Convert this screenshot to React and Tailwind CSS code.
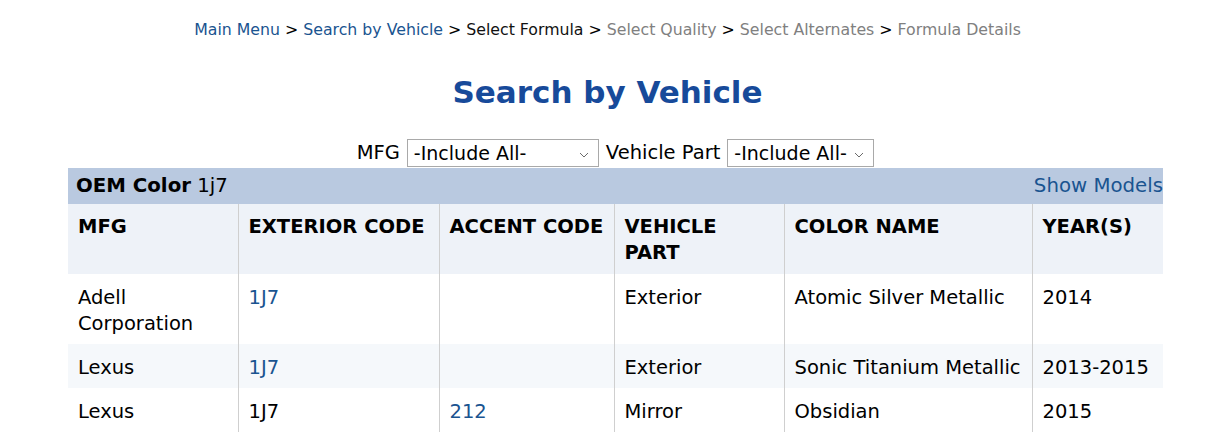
import React from "react";

const font = { fontFamily: '"DejaVu Sans", Verdana, sans-serif' };

function Chevron() {
  return (
    <svg width="10" height="6" viewBox="0 0 10 6" className="absolute right-[9px] top-[12px] pointer-events-none">
      <path d="M1 1 L5 5 L9 1" fill="none" stroke="#6b6b6b" strokeWidth="1" />
    </svg>
  );
}

function Select({ w }) {
  return (
    <div className={`relative h-[28px] border border-[#a9a9a9] bg-white ${w}`}>
      <div className="pl-[6px] leading-[26px] text-[19px] text-black">-Include All-</div>
      <Chevron />
    </div>
  );
}

const rows = [
  { mfg: "Adell Corporation", ext: "1J7", extLink: true, acc: "", part: "Exterior", color: "Atomic Silver Metallic", year: "2014", bg: "bg-white" },
  { mfg: "Lexus", ext: "1J7", extLink: true, acc: "", part: "Exterior", color: "Sonic Titanium Metallic", year: "2013-2015", bg: "bg-[#f5f8fb]" },
  { mfg: "Lexus", ext: "1J7", extLink: false, acc: "212", part: "Mirror", color: "Obsidian", year: "2015", bg: "bg-white" },
];

export default function App() {
  return (
    <div className="w-[1215px] h-[433px] overflow-hidden bg-white text-black" style={font}>
      <div className="pt-[20px] text-center text-[15.75px] leading-[20px]">
        <span className="text-[#1a5490]">Main Menu</span>
        <span> &gt; </span>
        <span className="text-[#1a5490]">Search by Vehicle</span>
        <span> &gt; </span>
        <span className="text-[#111]">Select Formula</span>
        <span> &gt; </span>
        <span className="text-[#808080]">Select Quality</span>
        <span> &gt; </span>
        <span className="text-[#808080]">Select Alternates</span>
        <span> &gt; </span>
        <span className="text-[#808080]">Formula Details</span>
      </div>
      <h1 className="mt-[33px] text-center text-[31px] leading-[38px] font-bold text-[#174a9a]">Search by Vehicle</h1>
      <div className="ml-[68px] w-[1095px]">
        <div className="mt-[27px] flex items-center justify-center gap-[7px] text-[19.5px]">
          <span>MFG</span>
          <Select w="w-[192px]" />
          <span>Vehicle Part</span>
          <Select w="w-[147px]" />
        </div>
        <div className="mt-[1px] h-[36px] bg-[#b9c9e0] flex items-center justify-between pl-[8px] text-[19.75px]">
          <div>
            <span className="font-bold">OEM Color</span> 1j7
          </div>
          <span className="text-[#1a5490]">Show Models</span>
        </div>
        <table className="w-full table-fixed border-collapse text-[19.5px] leading-[26px]">
          <colgroup>
            <col className="w-[170px]" />
            <col className="w-[201px]" />
            <col className="w-[175px]" />
            <col className="w-[170px]" />
            <col className="w-[248px]" />
            <col />
          </colgroup>
          <thead>
            <tr className="bg-[#eef2f8] align-top font-bold text-left">
              <th className="px-[10px] pt-[10px] pb-[8px] h-[70px]">MFG</th>
              <th className="px-[10px] pt-[10px] pb-[8px] border-l border-[#cfcfcf]">EXTERIOR CODE</th>
              <th className="px-[10px] pt-[10px] pb-[8px] border-l border-[#cfcfcf]">ACCENT CODE</th>
              <th className="px-[10px] pt-[10px] pb-[8px] border-l border-[#cfcfcf]">VEHICLE PART</th>
              <th className="px-[10px] pt-[10px] pb-[8px] border-l border-[#cfcfcf]">COLOR NAME</th>
              <th className="px-[10px] pt-[10px] pb-[8px] border-l border-[#cfcfcf]">YEAR(S)</th>
            </tr>
          </thead>
          <tbody>
            {rows.map((r, i) => (
              <tr key={i} className={`${r.bg} align-top`}>
                <td className="px-[10px] pt-[11px] pb-[7px]">{r.mfg}</td>
                <td className={`px-[10px] pt-[11px] pb-[7px] border-l border-[#cfcfcf] ${r.extLink ? "text-[#1a5490]" : ""}`}>{r.ext}</td>
                <td className="px-[10px] pt-[11px] pb-[7px] border-l border-[#cfcfcf] text-[#1a5490]">{r.acc}</td>
                <td className="px-[10px] pt-[11px] pb-[7px] border-l border-[#cfcfcf]">{r.part}</td>
                <td className="px-[10px] pt-[11px] pb-[7px] border-l border-[#cfcfcf] whitespace-nowrap">{r.color}</td>
                <td className="px-[10px] pt-[11px] pb-[7px] border-l border-[#cfcfcf]">{r.year}</td>
              </tr>
            ))}
          </tbody>
        </table>
      </div>
    </div>
  );
}
